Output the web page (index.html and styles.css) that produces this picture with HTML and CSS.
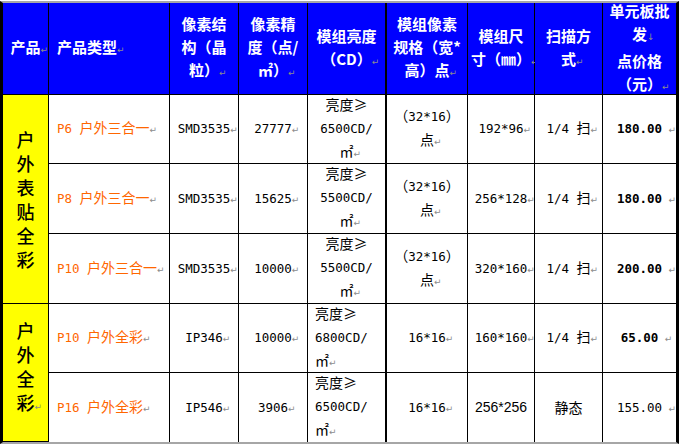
FILE: index.html
```html
<!DOCTYPE html>
<html lang="zh-CN">
<head>
<meta charset="utf-8">
<title>户外全彩报价表</title>
<link rel="stylesheet" href="styles.css">
</head>
<body>
<div class="sheet">
  <div class="c h"><span class="t">产品<span class="rt">↵</span></span></div>
  <div class="c h left"><span class="t">产品类型<span class="rt">↵</span></span></div>
  <div class="c h"><span class="t">像素结<br>构（晶<br>粒）<span class="rt">↵</span></span></div>
  <div class="c h"><span class="t">像素精<br>度（点/<br>㎡）<span class="rt">↵</span></span></div>
  <div class="c h thick"><span class="t">模组亮度<br>（CD）<span class="rt">↵</span></span></div>
  <div class="c h"><span class="t">模组像素<br>规格（宽*<br>高）点<span class="rt">↵</span></span></div>
  <div class="c h"><span class="t">模组尺<br>寸（㎜）<span class="rt">↵</span></span></div>
  <div class="c h"><span class="t">扫描方<br>式<span class="rt">↵</span></span></div>
  <div class="c h last"><span class="t">单元板批<br>发<span class="rt">↓</span><br>点价格<br>（元）<span class="rt">↵</span></span></div>

  <div class="c y span3"><span class="t">户<br>外<br>表<br>贴<br>全<br>彩</span></div>
  <div class="c left name"><span class="t"><span class="n">P6 </span>户外三合一<span class="rt">↵</span></span></div>
  <div class="c"><span class="t"><span class="n">SMD3535</span><span class="rt">↵</span></span></div>
  <div class="c"><span class="t"><span class="n">27777</span><span class="rt">↵</span></span></div>
  <div class="c thick"><span class="t">亮度≥<br><span class="n">6500CD/</span><br>㎡<span class="rt">↵</span></span></div>
  <div class="c"><span class="t">（<span class="n">32*16</span>）<br>点<span class="rt">↵</span></span></div>
  <div class="c"><span class="t"><span class="n">192*96</span><span class="rt">↵</span></span></div>
  <div class="c"><span class="t"><span class="n">1/4 </span>扫<span class="rt">↵</span></span></div>
  <div class="c last price"><span class="t"><span class="n">180.00</span><span class="rt sp">↵</span></span></div>

  <div class="c left name"><span class="t"><span class="n">P8 </span>户外三合一<span class="rt">↵</span></span></div>
  <div class="c"><span class="t"><span class="n">SMD3535</span><span class="rt">↵</span></span></div>
  <div class="c"><span class="t"><span class="n">15625</span><span class="rt">↵</span></span></div>
  <div class="c thick"><span class="t">亮度≥<br><span class="n">5500CD/</span><br>㎡<span class="rt">↵</span></span></div>
  <div class="c"><span class="t">（<span class="n">32*16</span>）<br>点<span class="rt">↵</span></span></div>
  <div class="c"><span class="t"><span class="n">256*128</span><span class="rt">↵</span></span></div>
  <div class="c"><span class="t"><span class="n">1/4 </span>扫<span class="rt">↵</span></span></div>
  <div class="c last price"><span class="t"><span class="n">180.00</span><span class="rt sp">↵</span></span></div>

  <div class="c left name"><span class="t"><span class="n">P10 </span>户外三合一<span class="rt">↵</span></span></div>
  <div class="c"><span class="t"><span class="n">SMD3535</span><span class="rt">↵</span></span></div>
  <div class="c"><span class="t"><span class="n">10000</span><span class="rt">↵</span></span></div>
  <div class="c thick"><span class="t">亮度≥<br><span class="n">5500CD/</span><br>㎡<span class="rt">↵</span></span></div>
  <div class="c"><span class="t">（<span class="n">32*16</span>）<br>点<span class="rt">↵</span></span></div>
  <div class="c"><span class="t"><span class="n">320*160</span><span class="rt">↵</span></span></div>
  <div class="c"><span class="t"><span class="n">1/4 </span>扫<span class="rt">↵</span></span></div>
  <div class="c last price"><span class="t"><span class="n">200.00</span><span class="rt sp">↵</span></span></div>

  <div class="c y span2"><span class="t">户<br>外<br>全<br>彩<span class="rt">↵</span></span></div>
  <div class="c left name"><span class="t"><span class="n">P10 </span>户外全彩<span class="rt">↵</span></span></div>
  <div class="c"><span class="t"><span class="n">IP346</span><span class="rt">↵</span></span></div>
  <div class="c"><span class="t"><span class="n">10000</span><span class="rt">↵</span></span></div>
  <div class="c thick left bright"><span class="t">亮度≥<br><span class="n">6800CD/</span><br>㎡<span class="rt">↵</span></span></div>
  <div class="c"><span class="t"><span class="n">16*16</span><span class="rt">↵</span></span></div>
  <div class="c"><span class="t"><span class="n">160*160</span><span class="rt">↵</span></span></div>
  <div class="c"><span class="t"><span class="n">1/4 </span>扫<span class="rt">↵</span></span></div>
  <div class="c last price"><span class="t"><span class="n">65.00</span><span class="rt sp">↵</span></span></div>

  <div class="c left name bottom"><span class="t"><span class="n">P16 </span>户外全彩<span class="rt">↵</span></span></div>
  <div class="c bottom"><span class="t"><span class="n">IP546</span><span class="rt">↵</span></span></div>
  <div class="c bottom"><span class="t"><span class="n">3906</span><span class="rt">↵</span></span></div>
  <div class="c thick left bright bottom"><span class="t">亮度≥<br><span class="n">6500CD/</span><br>㎡<span class="rt">↵</span></span></div>
  <div class="c bottom"><span class="t"><span class="n">16*16</span><span class="rt">↵</span></span></div>
  <div class="c bottom"><span class="t sans">256*256</span></div>
  <div class="c bottom"><span class="t">静态</span></div>
  <div class="c last bottom"><span class="t"><span class="n">155.00</span><span class="rt sp">↵</span></span></div>
</div>
</body>
</html>
```

FILE: styles.css
```css
html, body {
  margin: 0;
  padding: 0;
  background: #ffffff;
}

body {
  font-family: "Noto Sans CJK SC", "Liberation Sans", sans-serif;
  font-size: 14px;
  color: #000000;
}

.sheet {
  box-sizing: border-box;
  width: 679px;
  margin-top: 1px;
  display: grid;
  grid-template-columns: 46px 121px 69px 69px 79px 81px 67px 68px 73px;
  grid-template-rows: 92px 69px 70px 70px 69px 69px;
  border-top: 2px solid #a6a6a6;
  border-bottom: 2px solid #a6a6a6;
  border-left: 3px solid #000000;
  border-right: 3px solid #000000;
}

.c {
  box-sizing: border-box;
  display: flex;
  align-items: center;
  justify-content: center;
  text-align: center;
  border-right: 1px solid #000000;
  border-bottom: 1px solid #000000;
  line-height: 23px;
  white-space: nowrap;
}

.t {
  display: block;
}

.c.thick {
  border-right-width: 2px;
}

.c.last {
  border-right: none;
}

.c.bottom {
  border-bottom: none;
}

.c.left {
  justify-content: flex-start;
  text-align: left;
  padding-left: 8px;
}

.c.bright {
  padding-left: 7px;
}

.h {
  background: #0000ff;
  color: #ffffff;
  font-weight: 700;
  font-size: 15px;
  line-height: 23px;
}

.y {
  background: #ffff00;
  font-size: 18px;
  line-height: 24px;
  font-weight: 500;
}

.span3 {
  grid-row: span 3;
}

.span2 {
  grid-row: span 2;
  padding-bottom: 8px;
}

.name {
  color: #ff6600;
}

.n {
  font-family: "DejaVu Sans Mono", "Liberation Mono", monospace;
  font-size: 12.5px;
}

.sans {
  font-family: "Liberation Sans", sans-serif;
  font-size: 14px;
}

.price {
  font-weight: 700;
}

.rt {
  display: inline-block;
  width: 9px;
  margin-right: -9px;
  font-family: "DejaVu Sans", sans-serif;
  font-size: 9px;
  font-weight: 400;
  color: #8c8c8c;
  text-align: left;
}

.rt.sp {
  width: 14px;
  margin-right: -14px;
  text-align: right;
}
```
